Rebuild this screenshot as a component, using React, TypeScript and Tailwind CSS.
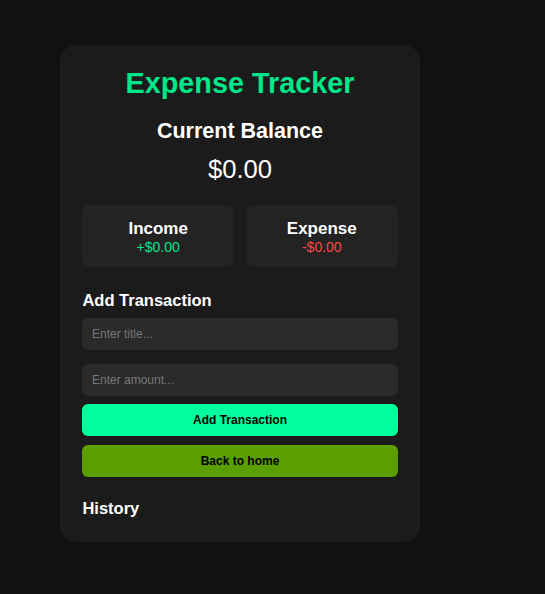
import { useState } from 'react';

// ─── Types ───────────────────────────────────────────────────────

interface Transaction {
  id: number;
  title: string;
  amount: number;
}

// ─── Component ───────────────────────────────────────────────────

/**
 * App — expense tracker card
 * - balance / income / expense summary
 * - add transaction form
 * - history list (empty by default)
 */
export default function App() {
  const [title, setTitle] = useState('');
  const [amount, setAmount] = useState('');
  const [transactions, setTransactions] = useState<Transaction[]>([]);

  const income = transactions
    .filter((t) => t.amount > 0)
    .reduce((sum, t) => sum + t.amount, 0);
  const expense = transactions
    .filter((t) => t.amount < 0)
    .reduce((sum, t) => sum - t.amount, 0);
  const balance = income - expense;

  const handleAdd = () => {
    const value = parseFloat(amount);
    if (!title.trim() || isNaN(value)) return;
    setTransactions((prev) => [...prev, { id: Date.now(), title, amount: value }]);
    setTitle('');
    setAmount('');
  };

  return (
    <div className="min-h-[594px] bg-[#111111] pt-[45px] pl-[60px] font-['Liberation_Sans',Arial,sans-serif]">
      <div className="w-[360px] rounded-[16px] bg-[#1b1b1b] px-[22.4px] pt-[22.4px] pb-[24.4px] text-white">
        {/* 标题 */}
        <h1 className="text-center text-[28.8px] font-bold leading-[1.15] text-[#00e68a]">
          Expense Tracker
        </h1>

        {/* 余额 */}
        <h2 className="mt-[18.5px] text-center text-[21.5px] font-bold leading-[1.15]">
          Current Balance
        </h2>
        <div className="mt-[11px] text-center text-[25.6px] leading-[1.15]">
          ${balance.toFixed(2)}
        </div>

        {/* 收入 / 支出 */}
        <div className="mt-[21px] grid grid-cols-2 gap-[12px]">
          <div className="flex h-[62px] flex-col items-center justify-center rounded-[8px] bg-[#232323] pt-[2px]">
            <div className="text-[17px] font-bold leading-[1.15]">Income</div>
            <div className="mt-[1px] text-[14px] leading-[1.15] text-[#00e68a]">
              +${income.toFixed(2)}
            </div>
          </div>
          <div className="flex h-[62px] flex-col items-center justify-center rounded-[8px] bg-[#232323] pt-[2px]">
            <div className="text-[17px] font-bold leading-[1.15]">Expense</div>
            <div className="mt-[1px] text-[14px] leading-[1.15] text-[#ff4545]">
              -${expense.toFixed(2)}
            </div>
          </div>
        </div>

        {/* 添加交易 */}
        <h3 className="mt-[24px] text-[16.5px] font-bold leading-[1.15]">Add Transaction</h3>
        <input
          value={title}
          onChange={(e) => setTitle(e.target.value)}
          placeholder="Enter title..."
          className="mt-[8px] block h-[32px] w-full rounded-[6px] bg-[#2a2a2a] px-[9.6px] text-[12px] text-white outline-none placeholder:text-[#777777]"
        />
        <input
          value={amount}
          onChange={(e) => setAmount(e.target.value)}
          placeholder="Enter amount..."
          className="mt-[14px] block h-[32px] w-full rounded-[6px] bg-[#2a2a2a] px-[9.6px] text-[12px] text-white outline-none placeholder:text-[#777777]"
        />
        <button
          onClick={handleAdd}
          className="mt-[8px] block h-[32px] w-full rounded-[6px] bg-[#00ff9c] text-[12px] font-bold text-black"
        >
          Add Transaction
        </button>
        <button className="mt-[9px] block h-[32px] w-full rounded-[6px] bg-[#5a9e00] text-[12px] font-bold text-black">
          Back to home
        </button>

        {/* 历史 */}
        <h3 className="mt-[22px] text-[16.5px] font-bold leading-[1.15]">History</h3>
        {transactions.length > 0 && (
          <ul className="mt-[8px] space-y-[6px]">
            {transactions.map((t) => (
              <li
                key={t.id}
                className="flex justify-between rounded-[6px] bg-[#232323] px-[10px] py-[6px] text-[13px]"
              >
                <span>{t.title}</span>
                <span className={t.amount < 0 ? 'text-[#ff4545]' : 'text-[#00e68a]'}>
                  {t.amount < 0 ? '-' : '+'}${Math.abs(t.amount).toFixed(2)}
                </span>
              </li>
            ))}
          </ul>
        )}
      </div>
    </div>
  );
}
